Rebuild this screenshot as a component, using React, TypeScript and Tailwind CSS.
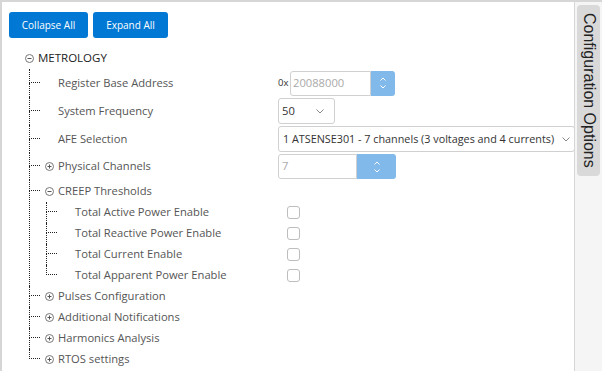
import type { ReactNode } from "react";

const font = { fontFamily: '"Open Sans", "Noto Sans", sans-serif' };

//* —————————————————————————————————————————————————————————————————————————————————————

const Toggle = ({ open }: { open: boolean }) => (
  <svg width="9" height="9" viewBox="0 0 9 9" className="shrink-0">
    <circle cx="4.5" cy="4.5" r="4" fill="none" stroke="#777" strokeWidth="1" />
    <line x1="2.5" y1="4.5" x2="6.5" y2="4.5" stroke="#555" strokeWidth="1" />
    {!open && <line x1="4.5" y1="2.5" x2="4.5" y2="6.5" stroke="#555" strokeWidth="1" />}
  </svg>
);

const Branch = ({
  half,
  last,
  children,
}: {
  half: string;
  last?: boolean;
  children: ReactNode;
}) => (
  <div className="flex">
    <div className="w-[11px] shrink-0 flex flex-col">
      <div className={`${half} border-l border-b border-dotted border-[#222]`} />
      <div className={`flex-1 ${last ? "" : "border-l border-dotted border-[#222]"}`} />
    </div>
    <div className="flex-1 min-w-0">{children}</div>
  </div>
);

const Spinner = ({ w }: { w: string }) => (
  <div className={`${w} shrink-0 h-full bg-[#80b9ea] rounded-r-[3px] flex flex-col items-center justify-center gap-[4px]`}>
    <svg width="6" height="4" viewBox="0 0 6 4">
      <path d="M0.5 3.5 L3 1 L5.5 3.5" fill="none" stroke="#fff" strokeWidth="1" />
    </svg>
    <svg width="6" height="4" viewBox="0 0 6 4">
      <path d="M0.5 0.5 L3 3 L5.5 0.5" fill="none" stroke="#fff" strokeWidth="1" />
    </svg>
  </div>
);

const Chevron = () => (
  <svg width="8" height="5" viewBox="0 0 8 5" className="shrink-0">
    <path d="M0.5 0.5 L4 4 L7.5 0.5" fill="none" stroke="#888" strokeWidth="1" />
  </svg>
);

const Check = () => (
  <div className="ml-[9px] w-[13px] h-[13px] shrink-0 border border-[#bdbdbd] rounded-[3px] bg-white" />
);

const creep = [
  "Total Active Power Enable",
  "Total Reactive Power Enable",
  "Total Current Enable",
  "Total Apparent Power Enable",
];

const groups = ["Pulses Configuration", "Additional Notifications", "Harmonics Analysis", "RTOS settings"];

export default function App() {
  return (
    <div
      className="w-[602px] h-[371px] flex border-t-2 border-[#d6d6d6] bg-white overflow-hidden text-[11.2px] text-[#555]"
      style={font}>
      <main className="w-[575px] shrink-0 border-l-2 border-r border-[#d6d6d6] overflow-hidden">
        <div className="flex gap-[5px] pl-[7px] pt-[10px]">
          <button className="w-[79px] h-[26px] bg-[#0078d4] rounded-[3px] text-white text-[10px]">
            Collapse All
          </button>
          <button className="w-[75px] h-[26px] bg-[#0078d4] rounded-[3px] text-white text-[10px]">
            Expand All
          </button>
        </div>

        <div className="pl-[23px] pt-[9px]">
          <div className="h-[22px] flex items-center gap-[4px] text-[#222] text-[11.5px]">
            <Toggle open />
            <span>METROLOGY</span>
          </div>

          <div className="ml-[4px]">
            <Branch half="h-[14px]">
              <div className="h-[28px] flex items-center">
                <span className="w-[238px] shrink-0 pl-[18px]">Register Base Address</span>
                <span className="text-[9.5px] text-[#333] w-[12px] shrink-0">0x</span>
                <div className="h-[25px] flex">
                  <div className="w-[81px] border border-[#d0d0d0] rounded-l-[3px] pl-[2px] flex items-center text-[#aaa]">
                    20088000
                  </div>
                  <Spinner w="w-[24px]" />
                </div>
              </div>
            </Branch>

            <Branch half="h-[14px]">
              <div className="h-[28px] flex items-center">
                <span className="w-[238px] shrink-0 pl-[18px]">System Frequency</span>
                <div className="w-[57px] h-[26px] border border-[#d0d0d0] rounded-[3px] flex items-center justify-between pl-[3px] pr-[10px] text-[#333]">
                  50
                  <Chevron />
                </div>
              </div>
            </Branch>

            <Branch half="h-[14px]">
              <div className="h-[28px] flex items-center">
                <span className="w-[238px] shrink-0 pl-[18px]">AFE Selection</span>
                <div className="w-[297px] shrink-0 h-[26px] border border-[#d0d0d0] rounded-[3px] flex items-center justify-between pl-[4px] pr-[4px] text-[#333] text-[10.8px] whitespace-nowrap">
                  1 ATSENSE301 - 7 channels (3 voltages and 4 currents)
                  <Chevron />
                </div>
              </div>
            </Branch>

            <Branch half="h-[13px]">
              <div className="h-[27px] flex items-center">
                <span className="w-[238px] shrink-0 pl-[5px] flex items-center gap-[4px]">
                  <Toggle open={false} />
                  Physical Channels
                </span>
                <div className="h-[25px] flex">
                  <div className="w-[79px] border border-[#d0d0d0] rounded-l-[3px] pl-[3px] flex items-center text-[#aaa]">
                    7
                  </div>
                  <Spinner w="w-[39px]" />
                </div>
              </div>
            </Branch>

            <Branch half="h-[11px]">
              <div className="h-[22px] flex items-center pl-[5px] gap-[4px]">
                <Toggle open />
                CREEP Thresholds
              </div>
              <div className="ml-[6px]">
                {creep.map((c, i) => (
                  <Branch key={c} half="h-[10px]" last={i === creep.length - 1}>
                    <div className="h-[21px] flex items-center">
                      <span className="w-[221px] shrink-0 pl-[18px]">{c}</span>
                      <Check />
                    </div>
                  </Branch>
                ))}
              </div>
            </Branch>

            {groups.map((g, i) => (
              <Branch key={g} half="h-[10px]" last={i === groups.length - 1}>
                <div className="h-[21px] flex items-center pl-[5px] gap-[4px]">
                  <Toggle open={false} />
                  {g}
                </div>
              </Branch>
            ))}
          </div>
        </div>
      </main>

      <aside className="flex-1 bg-[#f5f5f5] pt-[3px] pl-[2px]">
        <div
          className="w-[23px] h-[171px] bg-[#d9d9d9] rounded-[4px] flex items-center justify-center [writing-mode:vertical-rl] text-[16px] text-[#222] whitespace-nowrap"
          style={{ fontFamily: '"Liberation Sans", Arial, sans-serif' }}>
          Configuration Options
        </div>
      </aside>
    </div>
  );
}
